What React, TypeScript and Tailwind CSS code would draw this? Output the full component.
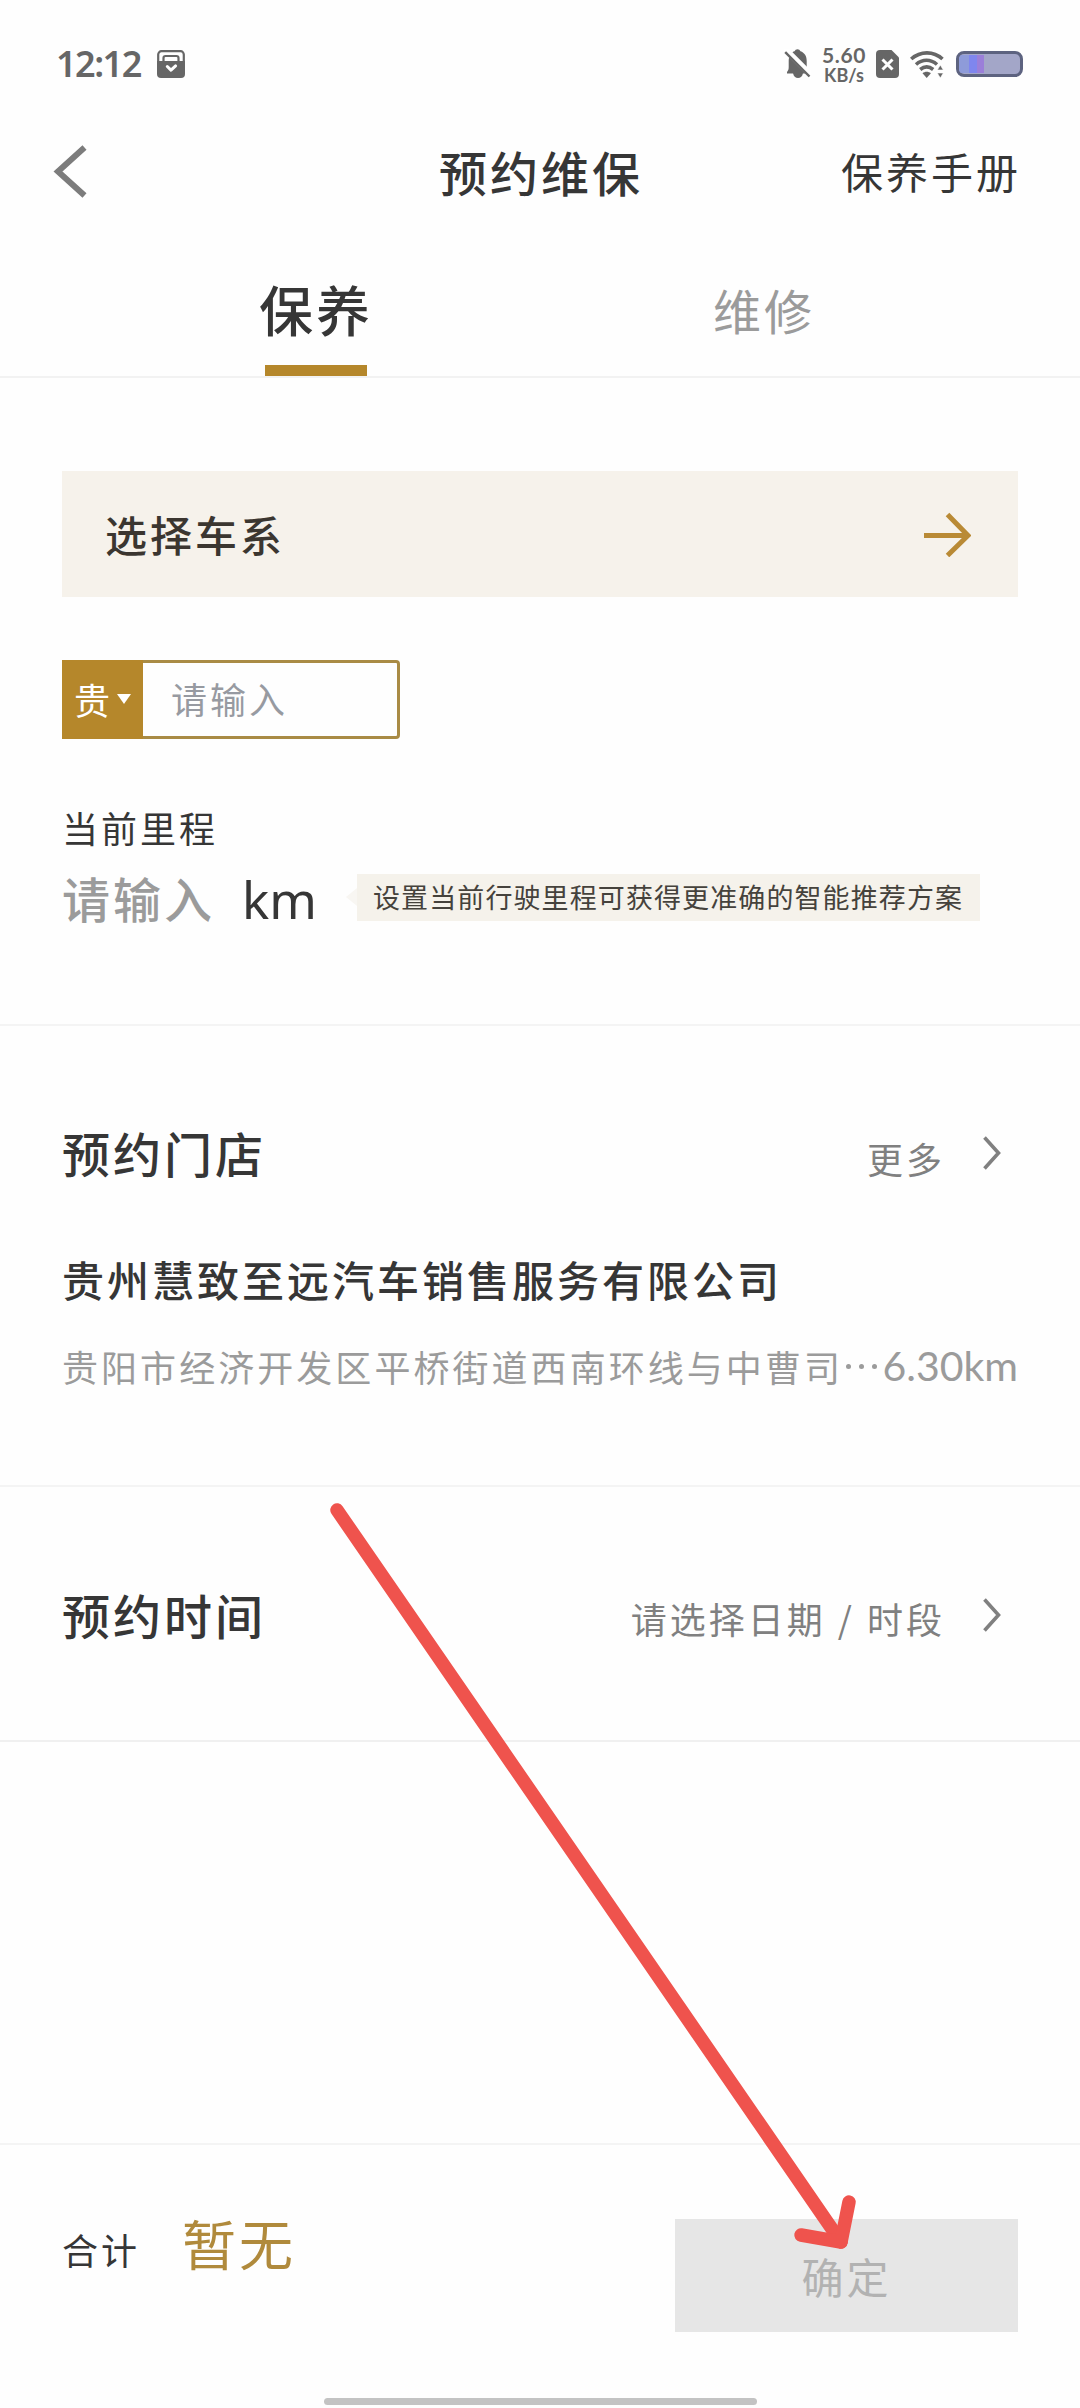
import { useState } from 'react'
import clsx from 'clsx'

const TABS = [
  { key: 'maintain', label: '保养' },
  { key: 'repair', label: '维修' },
]

function ChevronRight() {
  return (
    <svg width="20" height="36" viewBox="0 0 20 36" className="shrink-0" fill="none" stroke="#808080" strokeWidth="3.6">
      <path d="M2.5 3.500 16.5 19 2.5 34.500" />
    </svg>
  )
}

function StatusBar() {
  return (
    <header className="flex h-[128px] items-start pr-[57px] pl-[56px] text-[#666666]">
      <span className="mt-[39px] w-[101px] font-['Noto_Sans'] text-[36px] leading-[50px] font-semibold tracking-[-1.500px]">12:12</span>
      <svg width="28" height="28" viewBox="0 0 28 28" className="mt-[50px]" fill="none">
        <path d="M1.2 13V4.5a3.3 3.3 0 0 1 3.3-3.3h19a3.3 3.3 0 0 1 3.3 3.3V13" stroke="#666666" strokeWidth="2.2" />
        <path d="M6.5 12V8a2 2 0 0 1 2-2h11a2 2 0 0 1 2 2v4" stroke="#666666" strokeWidth="2.2" />
        <path d="M0 11h28v13a4 4 0 0 1-4 4H4a4 4 0 0 1-4-4z" fill="#666666" />
        <path d="m10.3 16.5 3.7 3.6 4.6-4.2" stroke="#fff" strokeWidth="3" strokeLinecap="round" strokeLinejoin="round" />
      </svg>

      <svg width="27" height="30" viewBox="0 0 27 30" className="mt-[49px] ml-auto" fill="#666666">
        <path d="M3 23c1.400-1.500 1.700-3 1.700-5v-6C4.700 6 8 2.800 10.500 2.200a3.300 3.300 0 0 1 6 0C20.500 3.600 22.700 7 22.700 12v6c0 2 .5 3.500 2 5v1.500H3z" />
        <path d="M9 24h10c-.5 3.500-2.500 5-5 5s-4.500-1.500-5-5z" />
        <path d="M-1 1 28 30" stroke="#fff" strokeWidth="6" transform="translate(1.500 -1.500)" />
        <path d="M1.200 3.200 25.500 27.500" stroke="#666666" strokeWidth="2.400" />
      </svg>
      <div className="mt-[44px] ml-[9px] flex w-[48px] flex-col items-center font-[Lato] font-bold">
        <span className="text-[21px] leading-[22px] tracking-[0.600px]">5.60</span>
        <span className="text-[18px] leading-[19px]">KB/s</span>
      </div>
      <svg width="23" height="28" viewBox="0 0 23 28" className="mt-[50px] ml-[8px]">
        <path d="M4 0h11.500L23 7.500V24a4 4 0 0 1-4 4H4a4 4 0 0 1-4-4V4a4 4 0 0 1 4-4z" fill="#666666" />
        <path d="m6.500 9.500 10 10m0-10-10 10" stroke="#fff" strokeWidth="3" />
      </svg>
      <svg width="34" height="28" viewBox="0 0 34 28" className="mt-[51px] ml-[11px]" fill="none" stroke="#666666" strokeWidth="3.600">
        <path d="M1.200 8C10.500-.2 23.500-.2 32.500 8" />
        <path d="M6 13.500c6.500-5.600 14.500-5.600 21 0" />
        <path d="M10.200 18.500c4.200-3.400 8.800-3.400 13 0" />
        <path d="M12.500 22.300c2.400-2 6-2 8.400 0L16.700 27z" fill="#666666" stroke="none" />
        <path d="M30.300 14l3 5h-6zM30.300 27l3-5h-6z" fill="#666666" stroke="#fff" strokeWidth=".6" />
      </svg>
      <div className="mt-[51px] ml-[12px] flex h-[26px] w-[67px] overflow-hidden rounded-[8px] border-[3px] border-[#5d6380] bg-[#a3a6c8] py-[1px]">
        <span className="w-[10px] bg-[#8e9bd9]" />
        <span className="w-[8px] bg-[#7f86ee]" />
        <span className="w-[7px] bg-[#9b7fd9]" />
      </div>
    </header>
  )
}

export default function App() {
  const [tab, setTab] = useState('maintain')

  return (
    <div className="relative flex h-[2408px] w-[1080px] flex-col overflow-hidden bg-[#fefefe] font-['Noto_Sans_CJK_SC',sans-serif] text-[#363636]">
      <StatusBar />

      <div className="grid h-[90px] grid-cols-3 items-center pr-[59px] pl-[53px]">
        <button type="button" aria-label="返回">
          <svg width="36" height="56" viewBox="0 0 36 56" fill="none" stroke="#7c7c7c" strokeWidth="6">
            <path d="M31.500 2.500 5 26.500l26.500 24" />
          </svg>
        </button>
        <h1 className="mb-[5px] pl-[8px] text-center text-[48px] leading-[60px] font-medium tracking-[3px] whitespace-nowrap">预约维保</h1>
        <span className="mb-[4px] text-right text-[42px] leading-[60px] tracking-[3px] whitespace-nowrap">保养手册</span>
      </div>

      <nav className="flex h-[160px] border-b-2 border-[#f2f2f2] px-[92px]">
        {TABS.map((item) => (
          <button
            key={item.key}
            type="button"
            onClick={() => setTab(item.key)}
            className={clsx(
              'relative flex flex-1 justify-center pt-[56px] leading-[70px] tracking-[3px]',
              tab === item.key ? 'text-[54px] font-medium' : 'text-[48px] text-[#9b9b9b]',
            )}
          >
            {item.label}
            {tab === item.key ? <span className="absolute bottom-0 left-1/2 h-[11px] w-[102px] -translate-x-1/2 bg-[#b5872b]" /> : null}
          </button>
        ))}
      </nav>

      <section className="flex h-[648px] flex-col border-b-2 border-[#f4f4f4] px-[62px] pt-[93px]">
        <button type="button" className="flex h-[126px] items-center justify-between bg-[#f6f2eb] pr-[47px] pl-[43px] text-[#3b3630]">
          <span className="text-[42px] leading-[60px] font-medium tracking-[3px]">选择车系</span>
          <svg width="47" height="46" viewBox="0 0 47 46" fill="none" stroke="#b98a35" strokeWidth="5">
            <path d="M0 24.500h44M23.500 3.500 44 24.500l-20.500 20" />
          </svg>
        </button>

        <div className="mt-[63px] flex h-[79px] w-[338px] rounded-r-[4px] border-[3px] border-[#a98b45]">
          <button type="button" className="-my-[3px] -ml-[3px] flex w-[81px] shrink-0 items-center gap-[7px] bg-[#b5872b] pb-[2px] pl-[12px] text-[36px] text-white">
            <span className="leading-none">贵</span>
            <svg width="14" height="10" viewBox="0 0 14 10" fill="#fff">
              <path d="M0 0h14L7 10z" />
            </svg>
          </button>
          <input placeholder="请输入" className="w-full min-w-0 bg-transparent pb-[3px] pl-[28px] text-[36px] tracking-[3px] outline-none placeholder:text-[#979aa1]" />
        </div>

        <div className="mt-[62px] text-[36px] leading-[52px] tracking-[3px]">当前里程</div>
        <div className="mt-[8px] flex h-[72px] items-center">
          <span className="w-[180px] text-[48px] leading-[70px] font-medium tracking-[3px] text-[#9b9b9b]">请输入</span>
          <span className="mt-[4px] w-[104px] font-['Noto_Sans'] text-[51px] leading-[66px] font-normal">km</span>
          <span className="h-0 w-0 border-y-[9px] border-r-[11px] border-y-transparent border-r-[#f8f6f2]" />
          <span className="flex h-[47px] w-[623px] items-center bg-[#f5f2eb] pl-[16px] text-[27px] leading-[40px] tracking-[1.100px] whitespace-nowrap text-[#45423c]">
            设置当前行驶里程可获得更准确的智能推荐方案
          </span>
        </div>
      </section>

      <section className="h-[461px] border-b-2 border-[#f4f4f4] px-[62px] pt-[91px]">
        <div className="flex h-[70px] items-center">
          <h2 className="text-[48px] leading-[70px] font-medium tracking-[3px]">预约门店</h2>
          <span className="mt-[11px] ml-auto text-[36px] leading-[52px] tracking-[3px] text-[#808080]">更多</span>
          <span className="mr-[16px] ml-[37px]">
            <ChevronRight />
          </span>
        </div>
        <div className="mt-[62px] text-[42px] leading-[60px] font-medium tracking-[3px]">贵州慧致至远汽车销售服务有限公司</div>
        <div className="mt-[29px] flex items-center justify-between text-[36px] leading-[56px] text-[#9b9b9b]">
          <span className="tracking-[3.050px] whitespace-nowrap">贵阳市经济开发区平桥街道西南环线与中曹司</span>
          <span className="flex gap-[8px] pr-[3px]">
            <i className="h-[5px] w-[5px] rounded-full bg-[#9b9b9b]" />
            <i className="h-[5px] w-[5px] rounded-full bg-[#9b9b9b]" />
            <i className="h-[5px] w-[5px] rounded-full bg-[#9b9b9b]" />
          </span>
          <span className="font-[Lato] text-[41px]">6.30km</span>
        </div>
      </section>

      <section className="flex h-[255px] items-center border-b-2 border-[#f0f0f0] px-[62px]">
        <h2 className="text-[48px] leading-[70px] font-medium tracking-[3px]">预约时间</h2>
        <span className="mt-[8px] ml-auto text-[36px] leading-[52px] tracking-[3px] text-[#808080] [word-spacing:1px]">请选择日期 / 时段</span>
        <span className="mr-[16px] ml-[37px]">
          <ChevronRight />
        </span>
      </section>

      <footer className="mt-auto flex h-[265px] flex-col border-t-2 border-[#f4f4f4]">
        <div className="flex h-[187px] items-end pr-[62px] pl-[62px]">
          <span className="mb-[57px] text-[36px] leading-[52px] tracking-[3px]">合计</span>
          <span className="mb-[50px] ml-[42px] text-[54px] leading-[78px] tracking-[3px] text-[#b08a3c]">暂无</span>
          <button type="button" disabled className="ml-auto h-[113px] w-[343px] bg-[#e6e6e6] text-[42px] tracking-[3px] text-[#b2b2b2]">
            确定
          </button>
        </div>
        <div className="mx-auto mt-auto mb-[3px] h-[7px] w-[433px] rounded-full bg-[#c3c3c3]" />
      </footer>

      {/* hand-drawn pointer over the confirm button */}
      <svg width="1080" height="2408" viewBox="0 0 1080 2408" className="pointer-events-none absolute inset-0" fill="none" stroke="#ef534d" strokeWidth="13.500" strokeLinecap="round" strokeLinejoin="round">
        <path d="M337 1510 841 2242" />
        <path d="M801 2235 841 2242 849 2202" />
      </svg>
    </div>
  )
}
